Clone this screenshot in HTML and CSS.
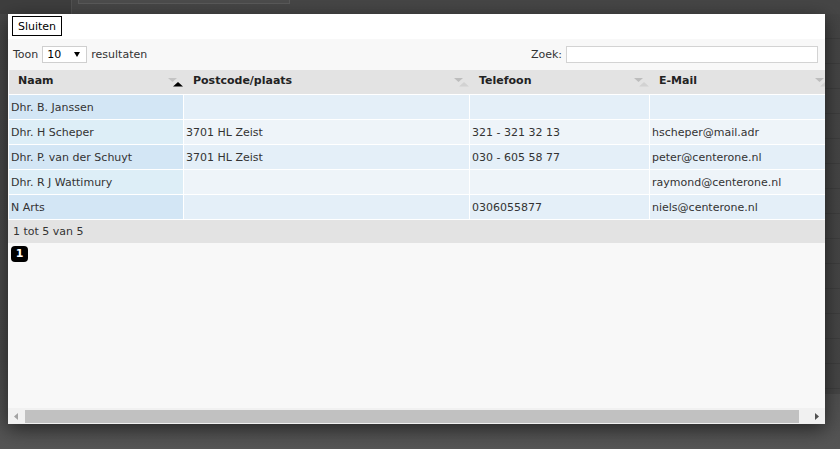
FILE: index.html
```html
<!DOCTYPE html>
<html lang="nl">
<head>
<meta charset="utf-8">
<title>Contacten</title>
<link rel="stylesheet" href="styles.css">
</head>
<body>
<div class="page">
  <div class="page-top">
    <div class="page-left"></div>
    <div class="page-field">10033033</div>
  </div>
  <div class="page-rows"></div>
</div>

<div class="dialog">
  <div class="titlebar"><button class="close" type="button">Sluiten</button></div>
  <div class="content">
    <div class="toolbar">
      <div class="length">
        <span>Toon</span>
        <span class="select"><span>10</span><svg class="caret" width="6" height="5" viewBox="0 0 6 5"><polygon points="0,0 6,0 3,5" fill="#000"/></svg></span>
        <span>resultaten</span>
      </div>
      <div class="search">
        <span>Zoek:</span>
        <span class="input"></span>
      </div>
    </div>

    <table class="grid">
      <colgroup>
        <col class="c1"><col class="c2"><col class="c3"><col class="c4">
      </colgroup>
      <thead>
        <tr>
          <th><div class="th"><span>Naam</span><svg class="sort" width="16" height="9" viewBox="0 0 16 9"><polygon points="0,0 9,0 4.5,4" fill="#c4c4c4"/><polygon points="5,8.5 15,8.5 10,4" fill="#000"/></svg></div></th>
          <th><div class="th"><span>Postcode/plaats</span><svg class="sort" width="16" height="9" viewBox="0 0 16 9"><polygon points="0,0 9,0 4.5,4" fill="#bdbdbd"/><polygon points="5,8.5 15,8.5 10,4" fill="#d2d2d2"/></svg></div></th>
          <th><div class="th"><span>Telefoon</span><svg class="sort" width="16" height="9" viewBox="0 0 16 9"><polygon points="0,0 9,0 4.5,4" fill="#bdbdbd"/><polygon points="5,8.5 15,8.5 10,4" fill="#d2d2d2"/></svg></div></th>
          <th><div class="th"><span>E-Mail</span><svg class="sort" width="16" height="9" viewBox="0 0 16 9"><polygon points="0,0 9,0 4.5,4" fill="#bdbdbd"/><polygon points="5,8.5 15,8.5 10,4" fill="#d2d2d2"/></svg></div></th>
        </tr>
      </thead>
      <tbody>
        <tr class="odd"><td class="sorted">Dhr. B. Janssen</td><td></td><td></td><td></td></tr>
        <tr class="even"><td class="sorted">Dhr. H Scheper</td><td>3701 HL Zeist</td><td>321 - 321 32 13</td><td>hscheper@mail.adr</td></tr>
        <tr class="odd"><td class="sorted">Dhr. P. van der Schuyt</td><td>3701 HL Zeist</td><td>030 - 605 58 77</td><td>peter@centerone.nl</td></tr>
        <tr class="even"><td class="sorted">Dhr. R J Wattimury</td><td></td><td></td><td>raymond@centerone.nl</td></tr>
        <tr class="odd"><td class="sorted">N Arts</td><td></td><td>0306055877</td><td>niels@centerone.nl</td></tr>
      </tbody>
    </table>

    <div class="info">1 tot 5 van 5</div>
    <div class="paging"><span class="pagebtn">1</span></div>
  </div>
  <div class="hscroll">
    <span class="arrow"><svg width="4" height="7" viewBox="0 0 4 7"><polygon points="4,0 4,7 0,3.5" fill="#a3a3a3"/></svg></span>
    <span class="track"><span class="thumb"></span></span>
    <span class="arrow"><svg width="4" height="7" viewBox="0 0 4 7"><polygon points="0,0 0,7 4,3.5" fill="#505050"/></svg></span>
  </div>
</div>
</body>
</html>
```

FILE: styles.css
```css
* { box-sizing: border-box; }

html, body {
  margin: 0;
  padding: 0;
}

body {
  width: 840px;
  height: 449px;
  overflow: hidden;
  position: relative;
  background: linear-gradient(#464646, #4a4a4a 80%, #555555);
  font-family: "DejaVu Sans", Verdana, sans-serif;
  font-size: 11px;
  color: #333;
}

/* dimmed page behind the modal */
.page {
  height: 449px;
  display: flex;
  flex-direction: column;
}

.page-top {
  display: flex;
  height: 14px;
  overflow: hidden;
}

.page-left {
  width: 72px;
  background: #3e3e3e;
  border-right: 1px solid #525252;
}

.page-field {
  margin-left: 6px;
  width: 212px;
  height: 14px;
  background: #4c4c4c;
  border: 1px solid #5a5a5a;
  border-top: 0;
  color: #8a8a8a;
  font-size: 12px;
  line-height: 1;
  padding-left: 4px;
  margin-top: -2px;
  transform: translateY(-8px);
}

.page-rows {
  flex: 1;
  background: repeating-linear-gradient(#444 0, #444 24px, #3c3c3c 24px, #3c3c3c 25px);
  margin-left: 825px;
  opacity: .9;
  height: 380px;
  flex: none;
}

/* modal */
.dialog {
  position: absolute;
  left: 8px;
  top: 14px;
  width: 817px;
  height: 410px;
  background: #fff;
  display: flex;
  flex-direction: column;
  box-shadow: 0 5px 18px rgba(0, 0, 0, .55);
}

.titlebar {
  height: 25px;
  flex: none;
  padding: 2px 0 0 4px;
}

.close {
  display: block;
  width: 50px;
  height: 20px;
  padding: 0;
  border: 1px solid #000;
  background: #fff;
  color: #000;
  font-family: "DejaVu Sans", Verdana, sans-serif;
  font-size: 11px;
}

.content {
  flex: 1;
  min-height: 0;
  background: #f8f8f8;
  overflow: hidden;
  display: flex;
  flex-direction: column;
}

.toolbar {
  height: 31px;
  flex: none;
  display: flex;
  align-items: center;
  justify-content: space-between;
  padding: 0 7px 0 5px;
  color: #333;
}

.length, .search {
  display: flex;
  align-items: center;
  gap: 4px;
}

.select {
  width: 45px;
  height: 17px;
  display: flex;
  align-items: center;
  padding: 0 6px 0 4px;
  background: #fff;
  border: 1px solid #cfcfcf;
  color: #000;
}

.caret {
  margin-left: auto;
}

.input {
  display: block;
  width: 252px;
  height: 17px;
  background: #fff;
  border: 1px solid #d3d3d3;
}

.grid {
  flex: none;
  width: 822px;
  margin-left: 1px;
  table-layout: fixed;
  border-collapse: separate;
  border-spacing: 0;
}

.c1 { width: 175px; }
.c2 { width: 286px; }
.c3 { width: 180px; }
.c4 { width: 181px; }

.grid th {
  height: 25px;
  padding: 0 0 0 9px;
  background: #e3e3e3;
  border-bottom: 1px solid #fff;
  text-align: left;
  font-weight: bold;
  color: #222;
}

.th {
  display: flex;
  align-items: center;
  justify-content: space-between;
  height: 24px;
}

.th span {
  padding-bottom: 4px;
}

.sort {
  flex: none;
}

.grid td {
  height: 25px;
  padding: 0 0 0 2px;
  border-right: 1px solid #fff;
  border-bottom: 1px solid #fff;
  white-space: nowrap;
  color: #333;
}

.odd td { background: #e4eff8; }
.odd td.sorted { background: #d3e6f5; }
.even td { background: #eef4f9; }
.even td.sorted { background: #ddeef7; }

.info {
  flex: none;
  height: 23px;
  line-height: 23px;
  padding-left: 5px;
  background: #e3e3e3;
  color: #333;
}

.paging {
  flex: none;
  padding: 3px 0 0 3px;
}

.pagebtn {
  display: inline-block;
  width: 17px;
  height: 16px;
  line-height: 16px;
  text-align: center;
  background: #000;
  color: #fff;
  font-weight: bold;
  border-radius: 4px;
}

.hscroll {
  height: 16px;
  flex: none;
  display: flex;
  background: #f1f1f1;
}

.arrow {
  width: 16px;
  height: 16px;
  flex: none;
  display: flex;
  align-items: center;
  justify-content: center;
}

.track {
  flex: 1;
  padding: 2px 0 1px 1px;
}

.thumb {
  display: block;
  width: 774px;
  height: 13px;
  background: #c1c1c1;
}
```
